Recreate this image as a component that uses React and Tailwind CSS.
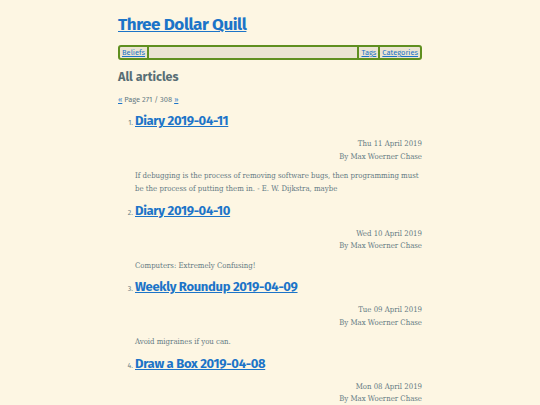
const articles = [
  {
    n: 1,
    title: 'Diary 2019-04-11',
    date: 'Thu 11 April 2019',
    summary: 'If debugging is the process of removing software bugs, then programming must be the process of putting them in. - E. W. Dijkstra, maybe',
  },
  { n: 2, title: 'Diary 2019-04-10', date: 'Wed 10 April 2019', summary: 'Computers: Extremely Confusing!' },
  { n: 3, title: 'Weekly Roundup 2019-04-09', date: 'Tue 09 April 2019', summary: 'Avoid migraines if you can.' },
  { n: 4, title: 'Draw a Box 2019-04-08', date: 'Mon 08 April 2019', summary: '' },
];

const sans = "font-['Fira_Sans','Noto_Sans',sans-serif]";
const serif = "font-['Roboto_Slab','DejaVu_Serif_Condensed','DejaVu_Serif',serif] font-stretch-condensed";

const Article = ({ a }) => (
  <li className="flex items-baseline">
    <span className={`${sans} w-[17px] shrink-0 text-right pr-[2px] text-[7px] text-[#657b83]`}>{a.n}.</span>
    <div className="flex-1">
      <div className={`${sans} text-[13px] leading-[16px] font-bold tracking-[-0.3px]`}>
        <a href="#" className="text-[#1c74c8] underline">{a.title}</a>
      </div>
      <div className={`${serif} mt-[9px] text-right text-[7.75px] leading-[12.5px] text-[#657b83]`}>
        <div>{a.date}</div>
        <div>By Max Woerner Chase</div>
      </div>
      {a.summary && (
        <p className={`${serif} mt-[6px] mb-[7.5px] text-[7.75px] leading-[13px] text-[#657b83]`}>{a.summary}</p>
      )}
    </div>
  </li>
);

export default function App() {
  return (
    <div className="h-[405px] bg-[#fdf6e3] overflow-hidden">
      <div className="w-[304px] mx-auto pt-[13px]">
        <h1 className={`${sans} text-[17px] leading-[24px] font-bold tracking-[-0.4px]`}>
          <a href="#" className="text-[#1c74c8] underline">Three Dollar Quill</a>
        </h1>
        <nav className={`${sans} mt-[8px] h-[15px] flex items-center border-2 border-[#5f8f1f] rounded-[3px] bg-[#ebe4d2] px-[2px] text-[7.5px] leading-[11px]`}>
          <a href="#" className="text-[#1c74c8] underline">Beliefs</a>
          <span className="w-[2px] h-[11px] bg-[#5f8f1f] ml-[2px]" />
          <span className="flex-1" />
          <span className="w-[2px] h-[11px] bg-[#5f8f1f] mr-[2px]" />
          <a href="#" className="text-[#1c74c8] underline">Tags</a>
          <span className="w-[2px] h-[11px] bg-[#5f8f1f] mx-[2px]" />
          <a href="#" className="text-[#1c74c8] underline">Categories</a>
        </nav>
        <h2 className={`${sans} mt-[8px] text-[12.5px] leading-[18px] font-bold text-[#586e75]`}>All articles</h2>
        <p className={`${sans} mt-[9px] text-[7.5px] leading-[10px] text-[#657b83]`}>
          <a href="#" className="text-[#1c74c8] underline">«</a> Page 271 / 308{' '}
          <a href="#" className="text-[#1c74c8] underline">»</a>
        </p>
        <ol className="mt-[8px]">
          {articles.map(a => <Article key={a.n} a={a} />)}
        </ol>
      </div>
    </div>
  );
}
